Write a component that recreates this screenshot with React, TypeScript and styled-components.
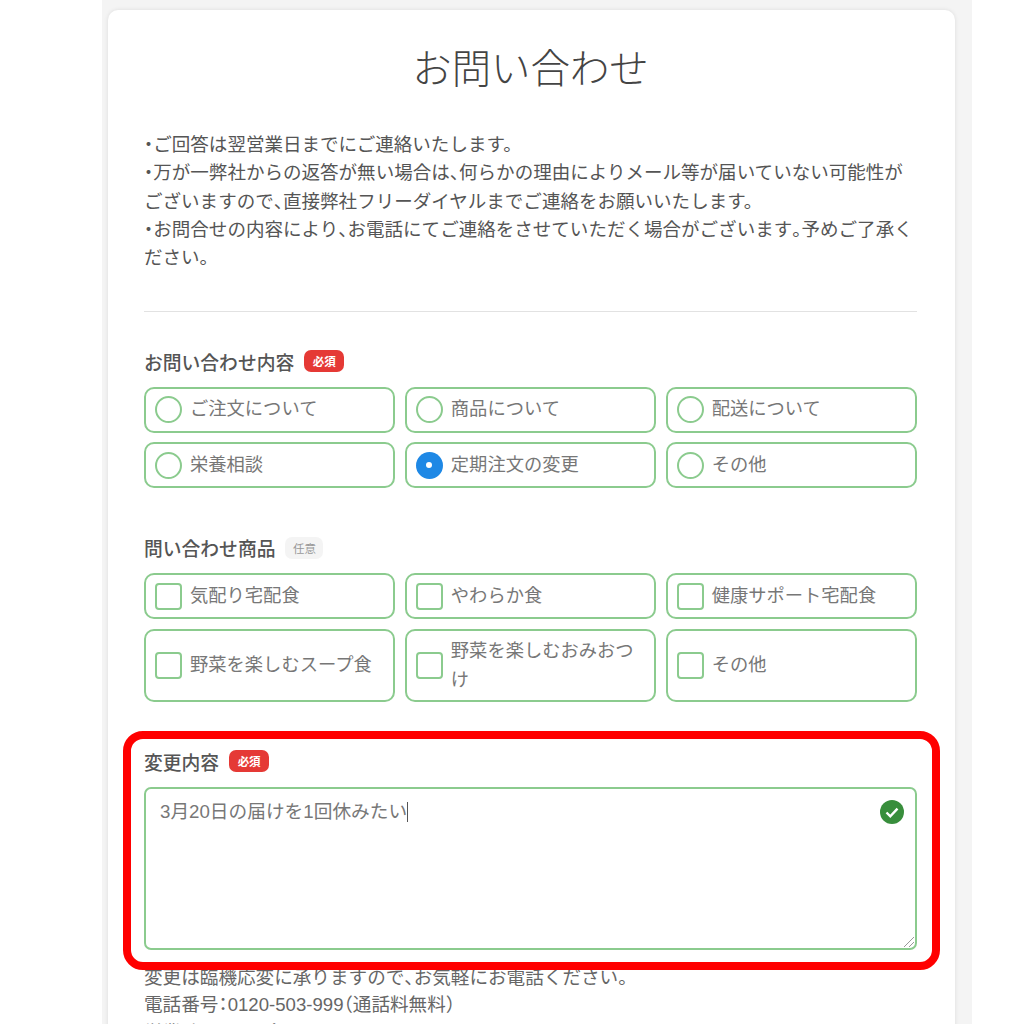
import React from 'react';
import styled, { createGlobalStyle } from 'styled-components';

const GlobalStyle = createGlobalStyle`
html, body {
  margin: 0;
  padding: 0;
  background: #fff;
  height: 1024px;
  overflow: hidden;
}
* { box-sizing: border-box; }
`;

const Page = styled.div`
position: relative;
width: 1024px;
height: 1024px;
overflow: hidden;
font-family: "Liberation Sans", "Noto Sans CJK JP", sans-serif;
color: #555;
`;

const Column = styled.div`
width: 870px;
height: 1024px;
margin-left: 102px;
padding: 10px 17px 0 6px;
background: #f4f4f4;
`;

const Card = styled.main`
background: #fff;
border-radius: 10px 10px 0 0;
box-shadow: 0 0 4px rgba(0, 0, 0, 0.1);
height: 1100px;
padding: 0 38px 0 36px;
`;

const Title = styled.h1`
margin: 0;
padding-top: 26px;
height: 121px;
font-family: "Noto Sans CJK JP", sans-serif;
font-size: 39.4px;
line-height: 60px;
font-weight: 300;
color: #444;
text-align: center;
`;

const Notice = styled.p`
margin: 0;
font-size: 18.55px;
line-height: 28.3px;
color: #555;
white-space: nowrap;
`;

// Punctuation set half width, as the original font does
const Punct = styled.span`
font-feature-settings: "halt";
`;

const Divider = styled.hr`
margin: 39px 0 35px;
border: 0;
border-top: 1px solid #e2e2e2;
`;

const Section = styled.section<{ $gap: number }>`
margin-bottom: ${p => p.$gap}px;
`;

const LabelRow = styled.div`
display: flex;
align-items: center;
gap: 10px;
height: 28px;
margin-bottom: 11.5px;
font-size: 18.8px;
font-weight: 500;
color: #555;
`;

const Badge = styled.span<{ $required?: boolean }>`
display: inline-flex;
align-items: center;
justify-content: center;
width: ${p => (p.$required ? '40px' : '38px')};
height: 22px;
border-radius: 7px;
font-size: 11.5px;
font-weight: ${p => (p.$required ? 700 : 400)};
background: ${p => (p.$required ? '#e53935' : '#f4f4f4')};
color: ${p => (p.$required ? '#fff' : '#999')};
`;

const OptionGrid = styled.div<{ $rowGap: number }>`
display: grid;
grid-template-columns: repeat(3, 1fr);
column-gap: 9.5px;
row-gap: ${p => p.$rowGap}px;
`;

const Option = styled.label<{ $h: number }>`
display: flex;
align-items: center;
gap: 8px;
height: ${p => p.$h}px;
padding: 0 10px 0 9px;
border: 2px solid #8bcb8e;
border-radius: 10px;
background: #fff;
font-size: 18.3px;
line-height: 29px;
color: #777;
`;

const OptionText = styled.span`
margin-top: -2px;
`;

const Radio = styled.span<{ $checked?: boolean }>`
position: relative;
flex: none;
width: 27px;
height: 27px;
border-radius: 50%;
border: ${p => (p.$checked ? 'none' : '2px solid #8bcb8e')};
background: ${p => (p.$checked ? '#1e88e5' : '#fff')};
&::after {
  content: ${p => (p.$checked ? '""' : 'none')};
  position: absolute;
  left: 10.5px;
  top: 10.5px;
  width: 6px;
  height: 6px;
  border-radius: 50%;
  background: #fff;
}
`;

const Checkbox = styled.span`
flex: none;
width: 27px;
height: 27px;
border: 2px solid #8bcb8e;
border-radius: 4px;
background: #fff;
`;

const TextBox = styled.div`
position: relative;
height: 163px;
padding: 9px 14px;
border: 2px solid #8bcb8e;
border-radius: 7px;
font-size: 18.7px;
line-height: 28px;
color: #777;
`;

const Caret = styled.span`
display: inline-block;
width: 1px;
height: 20px;
background: #555;
vertical-align: -4px;
`;

const OkIcon = styled.svg`
position: absolute;
top: 11px;
right: 11px;
width: 24px;
height: 24px;
`;

const Grip = styled.svg`
position: absolute;
right: 0;
bottom: 0;
width: 12px;
height: 12px;
`;

const Help = styled.div`
margin-top: 14px;
font-size: 18.6px;
line-height: 27.5px;
color: #666;
white-space: nowrap;
`;

const Highlight = styled.div`
position: absolute;
left: 123px;
top: 731px;
width: 817px;
height: 239px;
border: 8px solid #ff0000;
border-radius: 20px;
pointer-events: none;
`;

const inquiryTypes = [
  { text: 'ご注文について' },
  { text: '商品について' },
  { text: '配送について' },
  { text: '栄養相談' },
  { text: '定期注文の変更', checked: true },
  { text: 'その他' },
];

const products = [
  { text: '気配り宅配食', h: 46 },
  { text: 'やわらか食', h: 46 },
  { text: '健康サポート宅配食', h: 46 },
  { text: '野菜を楽しむスープ食', h: 73 },
  { text: '野菜を楽しむおみおつけ', h: 73 },
  { text: 'その他', h: 73 },
];

const App: React.FC = () => {
  return (
    <Page>
      <GlobalStyle />
      <Column>
        <Card>
          <Title>お問い合わせ</Title>
          <Notice>
            <Punct>・</Punct>ご回答は翌営業日までにご連絡いたします。<br />
            <Punct>・</Punct>万が一弊社からの返答が無い場合は<Punct>、</Punct>何らかの理由によりメール等が届いていない可能性が<br />
            ございますので<Punct>、</Punct>直接弊社フリーダイヤルまでご連絡をお願いいたします。<br />
            <Punct>・</Punct>お問合せの内容により<Punct>、</Punct>お電話にてご連絡をさせていただく場合がございます<Punct>。</Punct>予めご了承く<br />
            ださい。
          </Notice>
          <Divider />
          <Section $gap={45.5}>
            <LabelRow>お問い合わせ内容<Badge $required>必須</Badge></LabelRow>
            <OptionGrid $rowGap={9.5}>
              {inquiryTypes.map(o => (
                <Option key={o.text} $h={46}>
                  <Radio $checked={o.checked} />
                  <OptionText>{o.text}</OptionText>
                </Option>
              ))}
            </OptionGrid>
          </Section>
          <Section $gap={45}>
            <LabelRow>問い合わせ商品<Badge>任意</Badge></LabelRow>
            <OptionGrid $rowGap={10}>
              {products.map(o => (
                <Option key={o.text} $h={o.h}>
                  <Checkbox />
                  <OptionText>{o.text}</OptionText>
                </Option>
              ))}
            </OptionGrid>
          </Section>
          <section>
            <LabelRow>変更内容<Badge $required>必須</Badge></LabelRow>
            <TextBox>
              3月20日の届けを1回休みたい<Caret />
              <OkIcon viewBox="0 0 24 24">
                <circle cx="12" cy="12" r="12" fill="#388e3c" />
                <path d="M6.5 12.5l3.8 3.8 7.2-7.6" fill="none" stroke="#fff" strokeWidth="2.4" />
              </OkIcon>
              <Grip viewBox="0 0 12 12">
                <path d="M1 11L11 1M6 11l5-5" stroke="#999" strokeWidth="1" fill="none" />
              </Grip>
            </TextBox>
            <Help>
              変更は臨機応変に承りますので<Punct>、</Punct>お気軽にお電話ください。<br />
              電話番号<Punct>：</Punct>0120-503-999<Punct>（</Punct>通話料無料<Punct>）</Punct><br />
              営業時間<Punct>：</Punct>月〜金曜日 8:30〜19:00
            </Help>
          </section>
        </Card>
      </Column>
      <Highlight />
    </Page>
  );
};

export default App;
